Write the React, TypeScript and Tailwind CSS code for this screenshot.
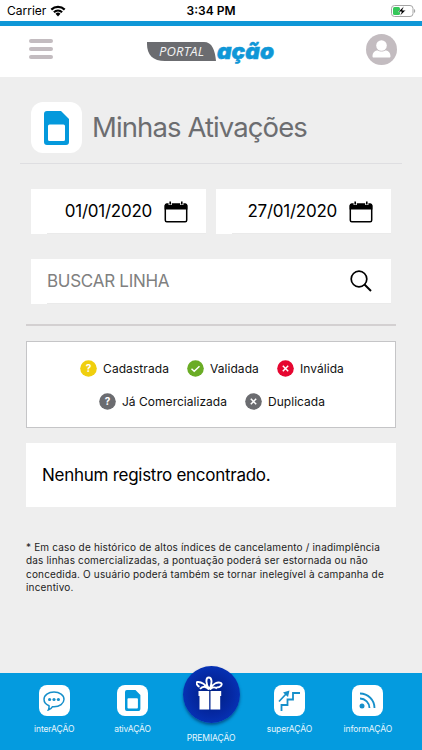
import type { ReactNode } from 'react';
import clsx from 'clsx';

interface LegendItemProps {
  label: string;
  color: string;
  icon: 'question' | 'check' | 'close';
  tracking: string;
}

function SimCard({ className }: { className: string }) {
  return (
    <svg viewBox="0 0 26 34" className={className}>
      <path
        fillRule="evenodd"
        fill="#0499dc"
        d="M3 0h14l8 8v23a3 3 0 0 1-3 3H3a3 3 0 0 1-3-3V3a3 3 0 0 1 3-3Zm2.500 13.500A1.500 1.500 0 0 0 4 15v13.500a1.500 1.500 0 0 0 1.500 1.500h14a1.500 1.500 0 0 0 1.500-1.500V15a1.500 1.500 0 0 0-1.500-1.500Z"
      />
    </svg>
  );
}

function StatusBar() {
  return (
    <div className="grid h-[21px] grid-cols-3 items-center bg-white text-black">
      <div className="flex items-center gap-[4px] pl-[7px]">
        <span className="text-[12px]">Carrier</span>
        <svg viewBox="0 0 16 12" className="h-[12px] w-[16px]">
          <path d="M1.300 4.600a9.700 9.700 0 0 1 13.400 0M3.900 7.300a6 6 0 0 1 8.200 0" fill="none" stroke="#000" strokeWidth="2.200" />
          <path d="m8 11.500-2.500-2.700a3.600 3.600 0 0 1 5 0Z" />
        </svg>
      </div>
      <span className="text-center text-[12px] font-semibold">3:34 PM</span>
      <div className="flex justify-end pr-[6px]">
        <svg viewBox="0 0 25 12" className="h-[12px] w-[25px]">
          <rect x=".5" y=".5" width="21.500" height="11" rx="3" fill="#fff" stroke="#a5a5a5" />
          <rect x="2" y="2" width="7" height="8" rx="1.500" fill="#35c759" />
          <path d="M23 4v4c1.700-.7 1.700-3.300 0-4Z" fill="#a5a5a5" />
          <path d="m12.800 1.200-5.500 5.600h3.200l-1.300 4 5.500-5.600h-3.200Z" fill="#000" stroke="#fff" strokeWidth=".5" />
        </svg>
      </div>
    </div>
  );
}

function Header() {
  return (
    <header className="flex h-[56px] items-center justify-between border-t-[5px] border-[#0f97d7] bg-white pr-[25px] pl-[29px]">
      <button className="flex w-6 flex-col gap-1 pb-[5px]" aria-label="Menu">
        <span className="h-1 rounded-full bg-[#c3bcc0]" />
        <span className="h-1 rounded-full bg-[#c3bcc0]" />
        <span className="h-1 rounded-full bg-[#c3bcc0]" />
      </button>
      <svg viewBox="0 0 130 26" className="mb-[2px] h-[26px] w-[130px]">
        <path d="M2 4h57c8 0 11 8 12 19H20C8 23 2 17 2 6Z" fill="#6b6c70" />
        <text x="14" y="18" textLength="45" className="font-[Open_Sans,sans-serif] text-[13px] italic" fill="#f2f2f2">
          PORTAL
        </text>
        <text
          x="72"
          y="21"
          textLength="57"
          lengthAdjust="spacingAndGlyphs"
          className="font-[Inter,sans-serif] text-[22px] font-black italic"
          fill="#0f97d7"
          stroke="#0f97d7"
          strokeWidth=".5"
        >
          ação
        </text>
      </svg>
      <svg viewBox="0 0 31 31" className="mb-[5px] size-[31px]">
        <circle cx="15.500" cy="15.500" r="15.500" fill="#c3bcc0" />
        <circle cx="15.500" cy="11.500" r="5.300" fill="#fff" />
        <path d="M6.500 22.300c0-3.800 2.500-5.800 5.500-5.800 1 1.300 6 1.300 7 0 3 0 5.500 2 5.500 5.800 0 .8-.4 1.200-1 1.200h-16c-.6 0-1-.4-1-1.200Z" fill="#fff" />
      </svg>
    </header>
  );
}

function DateField({ value }: { value: string }) {
  return (
    <div className="h-[45px] flex-1 bg-white pl-4">
      <div className="flex h-full items-center justify-end border-b border-[#eaeaea] pr-[18px]">
        <span className="mr-3 pt-px text-[17px] tracking-[-0.25px] text-black">{value}</span>
        <svg viewBox="0 0 24 22" className="mt-px h-[22px] w-6">
          <rect x="1.300" y="3.200" width="21.400" height="17.600" rx="1.500" fill="none" stroke="#000" strokeWidth="1.500" />
          <path d="M.6 8.500V4.500a2 2 0 0 1 2-2h18.800a2 2 0 0 1 2 2v4Z" />
          <path d="M6.200.5v3.500M17.800.5v3.500" stroke="#fff" strokeWidth="3.200" />
          <path d="M6.200.5v3M17.800.5v3" stroke="#000" strokeWidth="1.600" />
        </svg>
      </div>
    </div>
  );
}

function LegendItem({ label, color, icon, tracking }: LegendItemProps) {
  return (
    <div className="flex items-center gap-[6px]">
      <svg viewBox="0 0 17 17" className={clsx('size-[17px]', color)}>
        <circle cx="8.500" cy="8.500" r="8.300" fill="currentColor" />
        {icon === 'question' && (
          <text x="8.500" y="12" textAnchor="middle" className="text-[10px] font-bold" fill="#fff">?</text>
        )}
        {icon === 'check' && <path d="m4.500 8.700 2.700 2.500 5.300-5" fill="none" stroke="#fff" strokeWidth="1.500" />}
        {icon === 'close' && <path d="m5.800 5.800 5.400 5.400m0-5.400-5.400 5.400" stroke="#fff" strokeWidth="1.500" />}
      </svg>
      <span className={clsx('text-[12px] leading-4 text-[#111]', tracking)}>{label}</span>
    </div>
  );
}

function NavItem({ label, children }: { label: string; children: ReactNode }) {
  return (
    <a className="flex flex-1 flex-col items-center pt-3">
      <span className="flex size-[31px] items-center justify-center rounded-[8px] bg-white">{children}</span>
      <span className="mt-[6px] text-[8.5px] leading-[14px] tracking-[-0.1px] text-[#e6f6fd]">{label}</span>
    </a>
  );
}

function BottomNav() {
  return (
    <nav className="flex h-[77px] bg-[#049bdf] px-[15px]">
      <NavItem label="interAÇÃO">
        <svg viewBox="0 0 22 20" className="h-5 w-[22px]">
          <path d="M11 1c5.600 0 10 3.200 10 7.300s-4.400 7.400-10 7.400h-1.500C8.500 17.500 7 18.700 5.300 19c.7-1.300.9-2.700.7-4.200C3 13.500 1 11.100 1 8.300 1 4.200 5.400 1 11 1Z" fill="none" stroke="#168fca" strokeWidth="1.500" />
          <circle cx="6.600" cy="8.500" r="1.600" fill="#168fca" />
          <circle cx="11" cy="8.500" r="1.600" fill="#168fca" />
          <circle cx="15.400" cy="8.500" r="1.600" fill="#168fca" />
        </svg>
      </NavItem>
      <NavItem label="ativAÇÃO">
        <SimCard className="h-[21px] w-[16px]" />
      </NavItem>
      <a className="flex flex-1 flex-col items-center">
        <span className="-mt-[7px] flex size-[57px] shrink-0 items-center justify-center rounded-full bg-radial from-[#001f80] via-[#0529a4] to-[#073dc9] pr-[3px] pb-[4px] shadow-[0_2px_3px_rgba(0,40,90,0.6)]">
          <svg viewBox="0 0 28 34" className="h-[34px] w-7">
            <path d="M2.500 15h10.700v5H2.500Zm12 0h10.700v5H14.500ZM3.500 19h9.700v14.500H3.500Zm11 0h9.700v14.500h-9.700Z" fill="#fff" />
            <path d="M13 13.500C10 8.500 5 5.500 1.500 6c-2 .7-.5 3.700 2 4.800M13.300 13.500C9 6.500 10 1.500 12.800 1.500s4 4.500.7 12C17 7 22 5.500 25 7c2 1.500-.5 4.500-4.500 4.500M13 13.500c-3-3.500-6.500-3.500-9-.5m10 .5c2-2.500 5-2.500 7-1" fill="none" stroke="#fff" strokeWidth="1.900" />
          </svg>
        </span>
        <span className="mt-[8px] text-[8.5px] leading-[14px] tracking-[-0.1px] text-[#e6f6fd]">PREMIAÇÃO</span>
      </a>
      <NavItem label="superAÇÃO">
        <svg viewBox="0 0 22 22" className="size-[22px]">
          <path d="M3.500 21v-6h6V9.500h5.500V3h7" fill="none" stroke="#168fca" strokeWidth="1.800" />
          <path d="m1 11.500 8-8.500" stroke="#168fca" strokeWidth="1.700" />
          <path d="m11.500.5-1.500 6.500-5-4.500Z" fill="#168fca" />
        </svg>
      </NavItem>
      <NavItem label="informAÇÃO">
        <svg viewBox="0 0 17 17" className="size-[17px]">
          <circle cx="3" cy="14" r="2.500" fill="#168fca" />
          <path d="M1 6.500A9.500 9.500 0 0 1 10.500 16M1 1.500A14.500 14.500 0 0 1 15.500 16" fill="none" stroke="#168fca" strokeWidth="1.800" />
        </svg>
      </NavItem>
    </nav>
  );
}

export default function App() {
  return (
    <div className="flex h-[750px] w-[422px] flex-col overflow-hidden bg-[#eee] font-[Inter,sans-serif]">
      <StatusBar />
      <Header />
      <main className="flex-1 px-[26px]">
        <div className="-mx-[6px] flex h-[87px] items-center gap-[10px] border-b border-[#dedee1] pt-[15px] pl-[11px]">
          <div className="flex size-[51px] items-center justify-center rounded-[12px] bg-white">
            <SimCard className="h-[34px] w-[26px]" />
          </div>
          <h1 className="text-[27.5px] tracking-[-0.9px] text-[#6c6d70]">Minhas Ativações</h1>
        </div>

        <div className="mx-[5px] mt-[25px] flex gap-[10px]">
          <DateField value="01/01/2020" />
          <DateField value="27/01/2020" />
        </div>

        <div className="mx-[5px] mt-[25px] h-[45px] bg-white pl-4">
          <div className="flex h-full items-center justify-between border-b border-[#eaeaea] pr-[19px]">
            <span className="pt-px text-[17px] tracking-[-0.27px] text-[#808080]">BUSCAR LINHA</span>
            <svg viewBox="0 0 22 22" className="size-[22px]">
              <circle cx="9" cy="9" r="7.800" fill="none" stroke="#000" strokeWidth="1.700" />
              <path d="m14.500 14.500 6.500 6.500" stroke="#000" strokeWidth="1.900" />
            </svg>
          </div>
        </div>

        <hr className="mt-5 border-t-2 border-[#d3d0d1]" />

        <div className="mt-[15px] flex h-[87px] flex-col items-center justify-center gap-4 border border-[#c5c5c7] bg-white pt-px">
          <div className="flex gap-[18px] pl-[2px]">
            <LegendItem label="Cadastrada" color="text-[#f0cf0e]" icon="question" tracking="tracking-[0.07px]" />
            <LegendItem label="Validada" color="text-[#6aac25]" icon="check" tracking="tracking-[0.07px]" />
            <LegendItem label="Inválida" color="text-[#e60630]" icon="close" tracking="tracking-[0.07px]" />
          </div>
          <div className="flex gap-[18px] pl-[2px]">
            <LegendItem label="Já Comercializada" color="text-[#6b6c70]" icon="question" tracking="tracking-[0.03px]" />
            <LegendItem label="Duplicada" color="text-[#6b6c70]" icon="close" tracking="tracking-[0.03px]" />
          </div>
        </div>

        <div className="mt-[15px] flex h-[64px] items-center bg-white pt-px pl-4 text-[17px] tracking-[-0.27px] text-black">
          Nenhum registro encontrado.
        </div>

        <p className="mt-[34px] text-[10px] leading-[13.3px] tracking-[0.17px] whitespace-nowrap text-[#222]">
          * Em caso de histórico de altos índices de cancelamento / inadimplência
          <br />
          das linhas comercializadas, a pontuação poderá ser estornada ou não
          <br />
          concedida. O usuário poderá também se tornar inelegível à campanha de
          <br />
          incentivo.
        </p>
      </main>
      <BottomNav />
    </div>
  );
}
